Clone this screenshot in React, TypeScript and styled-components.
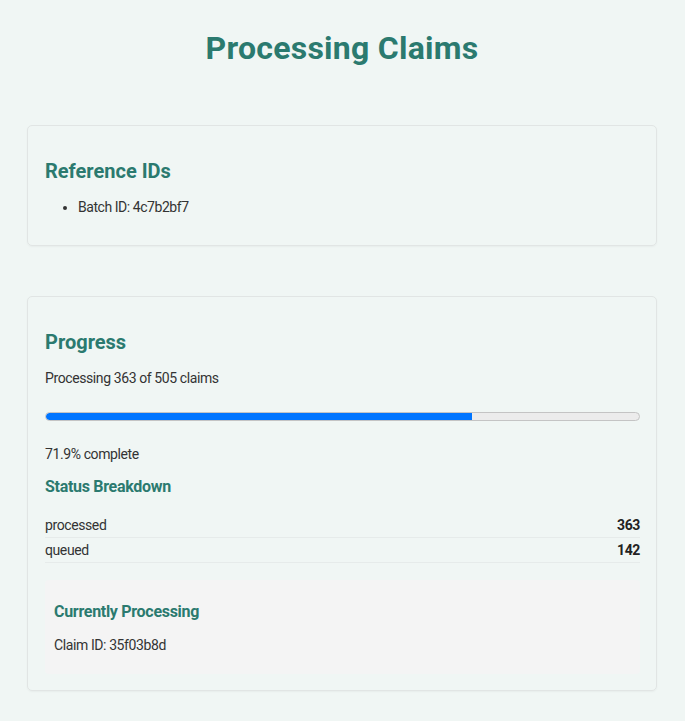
import styled, { createGlobalStyle } from "styled-components";

const GlobalStyle = createGlobalStyle`
  body {
    margin: 0;
    background: #f0f6f4;
    font-family: Roboto, "Liberation Sans", sans-serif;
    color: #333;
  }
`;

const Page = styled.main`
  display: flex;
  flex-direction: column;
  gap: 50px;
  padding: 0 28px 30px 27px;
`;

const Title = styled.h1`
  margin: 29px 0 8px;
  font-size: 32px;
  line-height: 38px;
  font-weight: 700;
  letter-spacing: 0.25px;
  color: #2b7a6f;
  text-align: center;
`;

const Card = styled.section`
  border: 1px solid #e1e5e4;
  border-radius: 5px;
  padding: 16px 16px 16px 17px;
  box-shadow: 0 1px 2px rgba(0, 0, 0, 0.04);
`;

const CardTitle = styled.h2`
  margin: 18px 0 0;
  font-size: 20px;
  line-height: 23px;
  font-weight: 700;
  color: #2b7a6f;
`;

const SubTitle = styled.h3<{ $top: number }>`
  margin: ${(p) => p.$top}px 0 0;
  font-size: 16px;
  line-height: 18.75px;
  font-weight: 700;
  letter-spacing: -0.3px;
  color: #2b7a6f;
`;

const IdList = styled.ul`
  margin: 16px 0 14px;
  padding-left: 33px;
  font-size: 14px;
  line-height: 16.4px;
  letter-spacing: -0.45px;
`;

const Text = styled.p<{ $top: number; $bottom?: number }>`
  margin: ${(p) => p.$top}px 0 ${(p) => p.$bottom ?? 0}px;
  font-size: 14px;
  line-height: 16.4px;
  letter-spacing: -0.4px;
`;

const Track = styled.div`
  margin-top: 25px;
  height: 9px;
  box-sizing: border-box;
  border: 1px solid #c4c4c4;
  border-radius: 5px;
  background: #ececec;
  overflow: hidden;
`;

const Fill = styled.div`
  height: 100%;
  background: #0075ff;
  border-radius: 5px 0 0 5px;
`;

const Breakdown = styled.div`
  margin-top: 16px;
  display: flex;
  flex-direction: column;
`;

const Row = styled.div`
  display: flex;
  justify-content: space-between;
  padding: 4px 0;
  font-size: 14px;
  line-height: 16px;
  letter-spacing: -0.4px;
  border-bottom: 1px solid #e6ebea;
`;

const Count = styled.strong`
  font-weight: 700;
  color: #222;
`;

const CurrentBox = styled.div`
  margin-top: 17px;
  padding: 8px 9px;
  background: #f4f4f4;
  border-radius: 4px;
`;

const statuses = [
  { name: "processed", count: 363 },
  { name: "queued", count: 142 },
];

const App = () => {
  const done = 363;
  const total = 505;
  const pct = (done / total) * 100;

  return (
    <>
      <GlobalStyle />
      <Page>
        <Title>Processing Claims</Title>

        <Card>
          <CardTitle>Reference IDs</CardTitle>
          <IdList>
            <li>Batch ID: 4c7b2bf7</li>
          </IdList>
        </Card>

        <Card>
          <CardTitle>Progress</CardTitle>
          <Text $top={16}>
            Processing {done} of {total} claims
          </Text>
          <Track>
            <Fill style={{ width: `${pct}%` }} />
          </Track>
          <Text $top={25}>{pct.toFixed(1)}% complete</Text>

          <SubTitle $top={16}>Status Breakdown</SubTitle>
          <Breakdown>
            {statuses.map((s) => (
              <Row key={s.name}>
                <span>{s.name}</span>
                <Count>{s.count}</Count>
              </Row>
            ))}
          </Breakdown>

          <CurrentBox>
            <SubTitle $top={15}>Currently Processing</SubTitle>
            <Text $top={15} $bottom={13}>
              Claim ID: 35f03b8d
            </Text>
          </CurrentBox>
        </Card>
      </Page>
    </>
  );
};

export default App;
